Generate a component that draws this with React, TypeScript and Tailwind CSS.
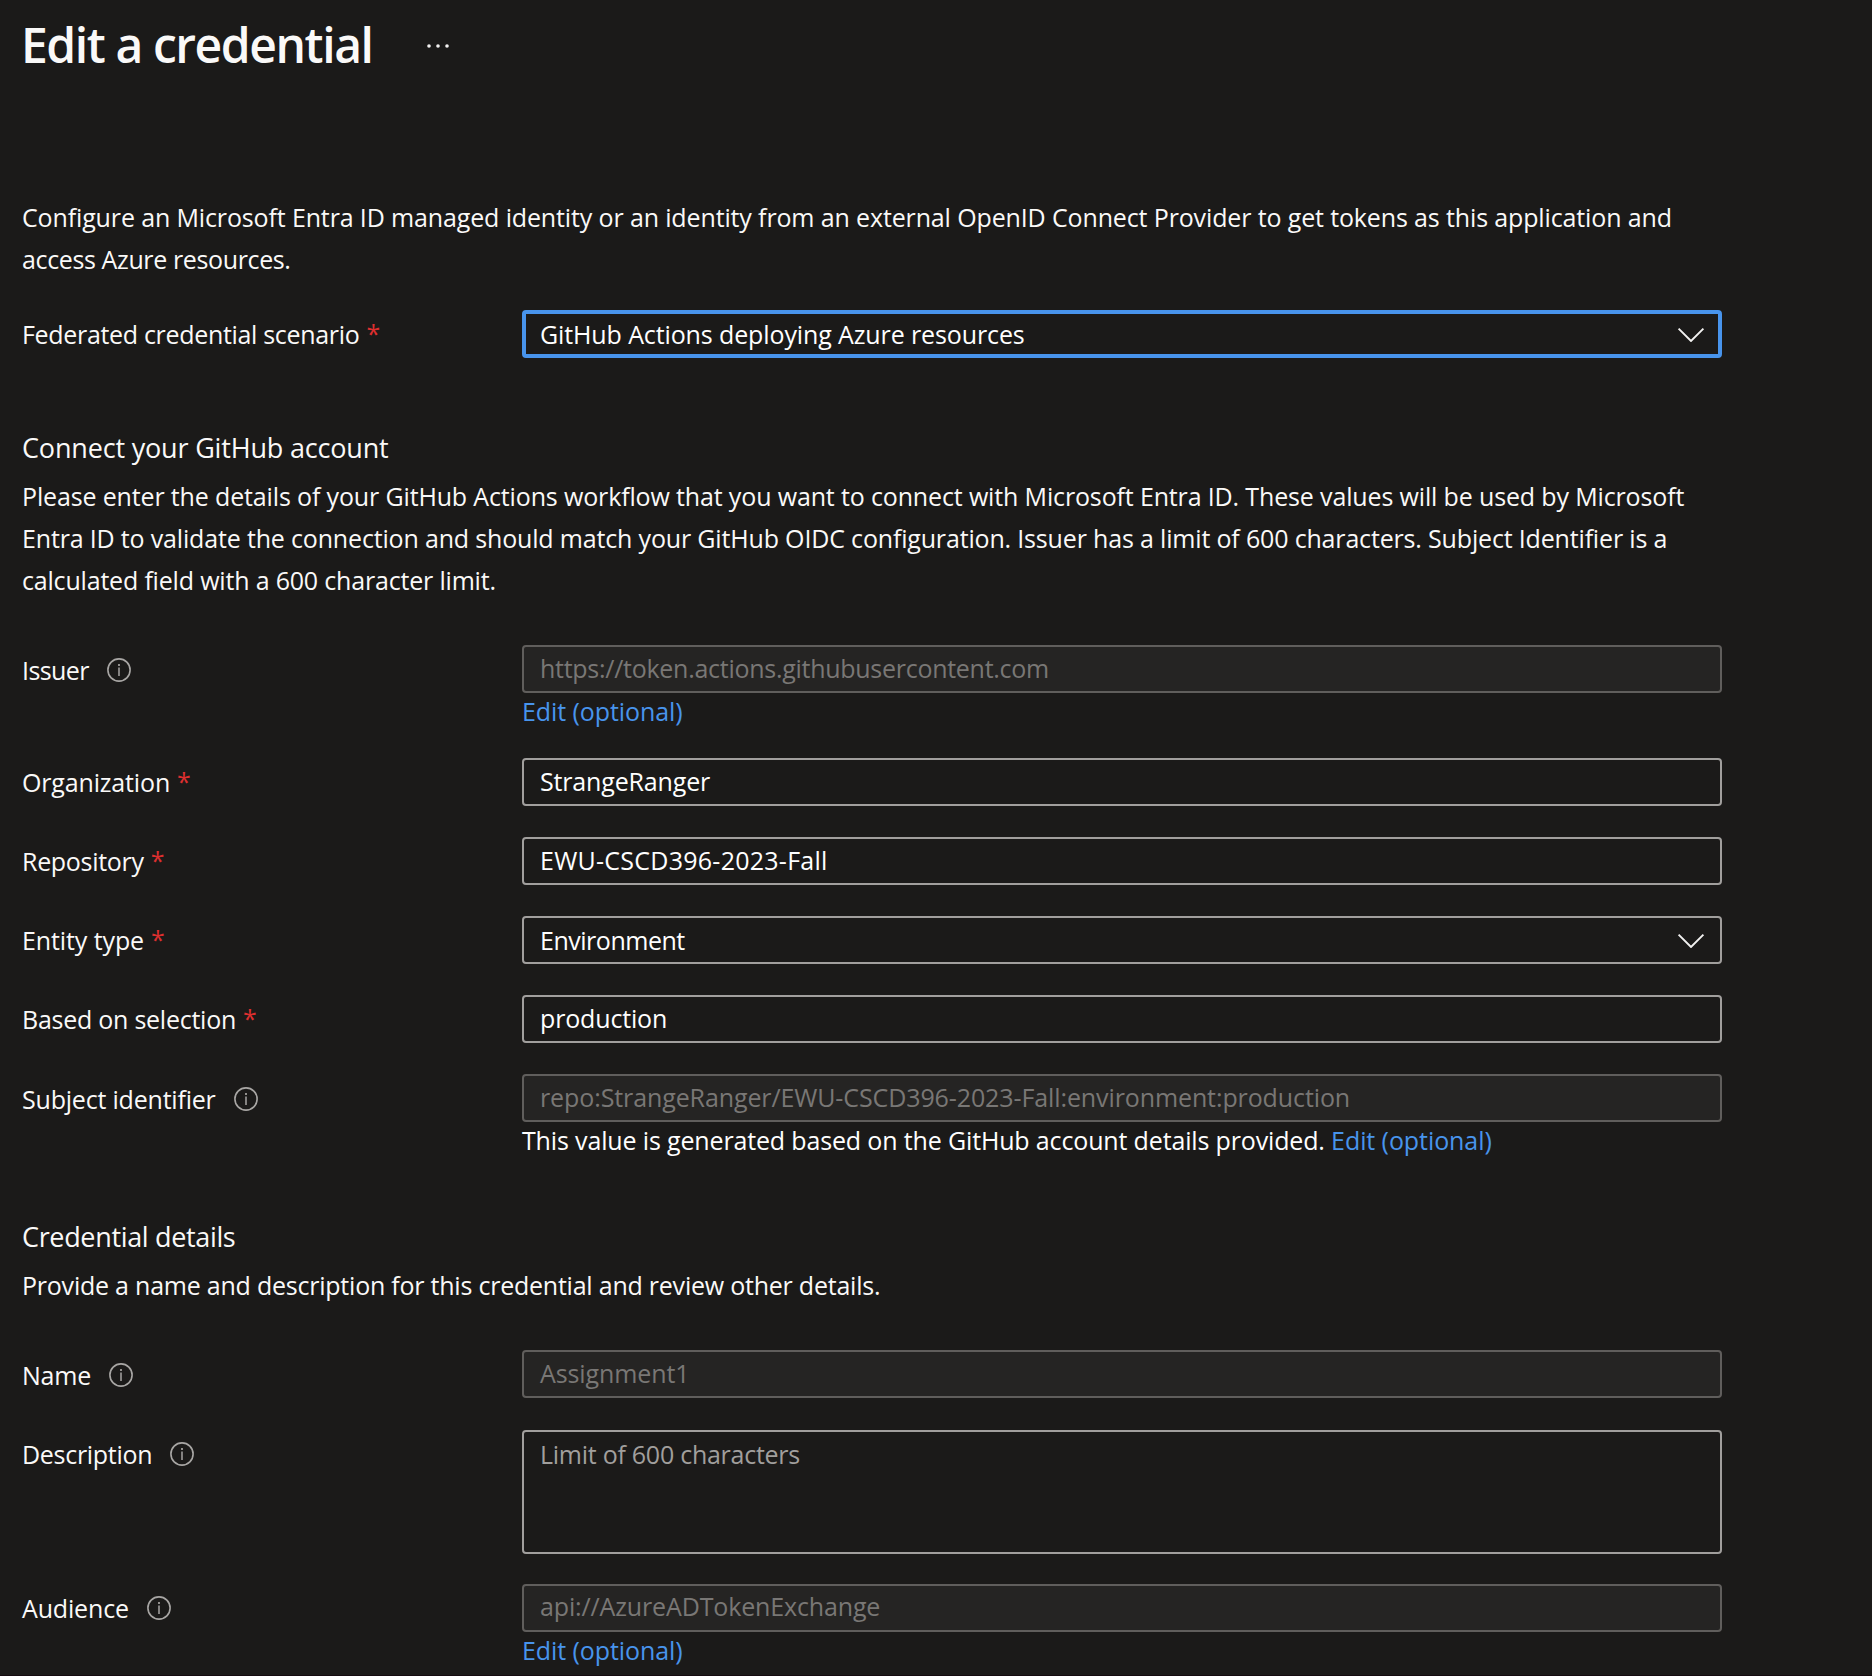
import type { ReactNode } from "react";

function InfoIcon() {
  return (
    <svg className="size-6 shrink-0 text-[#a8a6a4]" viewBox="0 0 24 24" fill="none" stroke="currentColor">
      <circle cx="12" cy="12" r="11.1" strokeWidth="1.6" />
      <path d="M12 9.6V18" strokeWidth="1.5" />
      <path d="M12 6V8" strokeWidth="1.7" />
    </svg>
  );
}

function Chevron({ className }: { className: string }) {
  return (
    <svg className={`h-4 w-7 shrink-0 ${className}`} viewBox="0 0 28 16" fill="none" stroke="#f3f2f1" strokeWidth="1.9">
      <path d="M1.6 2.6L14 15L26.4 2.6" />
    </svg>
  );
}

type Kind = "focus" | "select" | "input" | "disabled" | "area";

const boxStyles: Record<Kind, string> = {
  focus: "h-12 border-4 border-[#4894ec] pl-[14px] leading-10 text-white",
  select: "h-12 border-2 border-[#a19f9d] pl-4 leading-[44px] text-white",
  input: "h-12 border-2 border-[#a19f9d] pl-4 leading-[42px] text-white",
  disabled: "h-12 border-2 border-[#605e5c] bg-[#252423] pl-4 leading-[42px] text-[#797775]",
  area: "h-[124px] border-2 border-[#a19f9d] pl-4 leading-[44px] text-[#a19f9d]",
};

interface FieldProps {
  label: string;
  labelClass?: string;
  required?: boolean;
  value: string;
  valueClass?: string;
  kind: Kind;
  note?: ReactNode;
  className: string;
}

function Field({ label, labelClass = "", required, value, valueClass = "", kind, note, className }: FieldProps) {
  const isSelect = kind === "focus" || kind === "select";
  return (
    <div className={`grid grid-cols-[500px_1200px] items-start ${className}`}>
      {required ? (
        <label className="flex leading-[48px]">
          <span className={labelClass}>{label}</span>
          <span className="-mt-px ml-[7px] font-medium text-[#dd2f2f]">*</span>
        </label>
      ) : (
        <label
          className={`-mb-0.5 flex items-center leading-[50px] ${kind === "area" || label === "Audience" ? "-mt-px" : ""}`}
        >
          <span className={labelClass}>{label}</span>
          <span className="ml-[18px]">
            <InfoIcon />
          </span>
        </label>
      )}
      <div>
        <div
          className={`flex justify-between rounded-[4px] ${isSelect ? "items-center" : "items-start"} ${boxStyles[kind]}`}
        >
          <span className={valueClass}>{value}</span>
          {isSelect && <Chevron className={kind === "focus" ? "mr-[13px]" : "mr-[15px]"} />}
        </div>
        {note && <div className="mt-px leading-[34px] whitespace-nowrap">{note}</div>}
      </div>
    </div>
  );
}

const EditLink = () => <a className="tracking-[-0.08px] text-[#4894ec]">Edit (optional)</a>;

export default function App() {
  return (
    <main className="h-[1676px] w-[1872px] overflow-hidden border-b border-[#150b10] bg-[#1b1a19] pl-[22px] font-['Open_Sans',sans-serif] text-[25px] tracking-[-0.16px] whitespace-nowrap text-[#faf9f8]">
      <header className="-ml-px flex h-[196px] items-start pt-[13px]">
        <h1 className="text-[48px] leading-[64px] font-semibold tracking-[-1.42px]">Edit a credential</h1>
        <svg className="mt-[29px] ml-[53px] h-2 w-6" viewBox="0 0 24 8" fill="#f3f2f1">
          <circle cx="3" cy="4" r="1.8" />
          <circle cx="12" cy="4" r="1.8" />
          <circle cx="21" cy="4" r="1.8" />
        </svg>
      </header>

      <p className="leading-[42px]">
        <span className="tracking-[-0.135px]">
          Configure an Microsoft Entra ID managed identity or an identity from an external OpenID Connect Provider to get
          tokens as this application and
        </span>
        <br />
        <span className="tracking-[-0.37px]">access Azure resources.</span>
      </p>

      <Field
        className="mt-[30px]"
        label="Federated credential scenario"
        labelClass="tracking-[-0.32px]"
        required
        kind="focus"
        value="GitHub Actions deploying Azure resources"
        valueClass="tracking-[-0.115px]"
      />

      <h2 className="mt-[70px] text-[27px] leading-10 tracking-[-0.18px]">Connect your GitHub account</h2>
      <p className="mt-[7px] leading-[42px]">
        <span className="tracking-[-0.146px]">
          Please enter the details of your GitHub Actions workflow that you want to connect with Microsoft Entra ID.
          These values will be used by Microsoft
        </span>
        <br />
        <span className="tracking-[-0.168px]">
          Entra ID to validate the connection and should match your GitHub OIDC configuration. Issuer has a limit of 600
          characters. Subject Identifier is a
        </span>
        <br />
        <span className="tracking-[-0.185px]">calculated field with a 600 character limit.</span>
      </p>

      <Field
        className="mt-[44px]"
        label="Issuer"
        labelClass="tracking-[-0.6px]"
        kind="disabled"
        value="https://token.actions.githubusercontent.com"
        valueClass="tracking-[-0.275px]"
        note={<EditLink />}
      />
      <Field
        className="mt-[30px]"
        label="Organization"
        labelClass="tracking-[-0.16px]"
        required
        kind="input"
        value="StrangeRanger"
      />
      <Field
        className="mt-[31px]"
        label="Repository"
        labelClass="tracking-[-0.3px]"
        required
        kind="input"
        value="EWU-CSCD396-2023-Fall"
        valueClass="tracking-[0.26px]"
      />
      <Field
        className="mt-[31px]"
        label="Entity type"
        labelClass="tracking-[-0.1px]"
        required
        kind="select"
        value="Environment"
        valueClass="tracking-[-0.48px]"
      />
      <Field
        className="mt-[31px]"
        label="Based on selection"
        labelClass="tracking-[-0.25px]"
        required
        kind="input"
        value="production"
      />
      <Field
        className="mt-[31px]"
        label="Subject identifier"
        labelClass="tracking-[-0.2px]"
        kind="disabled"
        value="repo:StrangeRanger/EWU-CSCD396-2023-Fall:environment:production"
        valueClass="tracking-[-0.105px]"
        note={
          <>
            <span className="tracking-[-0.15px] text-white">
              This value is generated based on the GitHub account details provided.
            </span>{" "}
            <EditLink />
          </>
        }
      />

      <h2 className="mt-[60px] text-[27px] leading-10 tracking-[-0.34px]">Credential details</h2>
      <p className="mt-[7px] leading-[42px] tracking-[-0.227px]">
        Provide a name and description for this credential and review other details.
      </p>

      <Field
        className="mt-[44px]"
        label="Name"
        labelClass="tracking-[-0.2px]"
        kind="disabled"
        value="Assignment1"
        valueClass="tracking-[-0.1px]"
      />
      <Field
        className="mt-[32px]"
        label="Description"
        labelClass="tracking-[-0.29px]"
        kind="area"
        value="Limit of 600 characters"
        valueClass="tracking-[-0.26px]"
      />
      <Field
        className="mt-[30px]"
        label="Audience"
        labelClass="tracking-[-0.16px]"
        kind="disabled"
        value="api://AzureADTokenExchange"
        valueClass="leading-[40px] tracking-[-0.14px]"
        note={<EditLink />}
      />
    </main>
  );
}
